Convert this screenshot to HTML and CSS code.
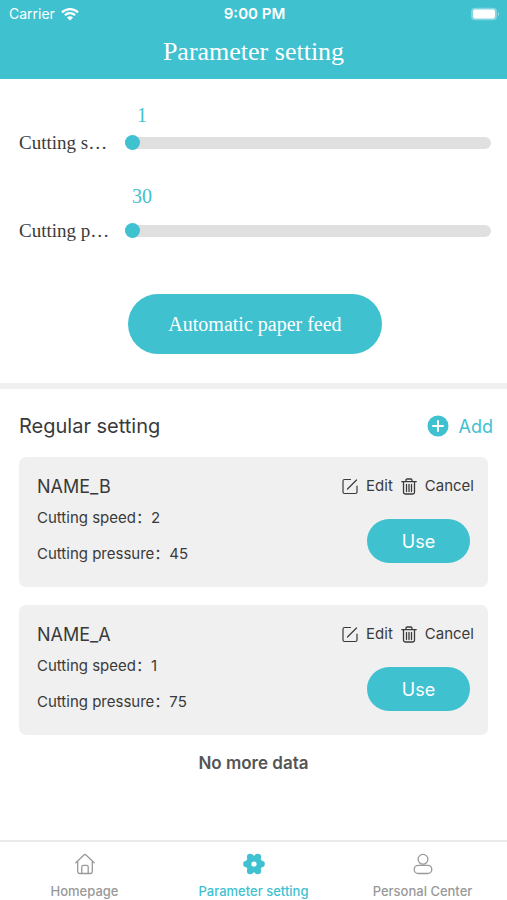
FILE: index.html
```html
<!DOCTYPE html>
<html lang="en">
<head>
<meta charset="utf-8">
<meta name="viewport" content="width=device-width, initial-scale=1">
<title>Parameter setting</title>
<link rel="stylesheet" href="styles.css">
</head>
<body>
<svg width="0" height="0" class="sprite" aria-hidden="true">
  <symbol id="icon-edit" viewBox="0 0 16 16">
    <path d="M8.500 1H2.500Q1 1 1 2.500v11Q1 15 2.500 15h11q1.500 0 1.500-1.500V7.500M5.500 10.500 14.500 1.500" fill="none" stroke="currentColor" stroke-width="1.200" stroke-linecap="round"/>
  </symbol>
  <symbol id="icon-trash" viewBox="0 0 16 17">
    <path d="M.8 3.700h14.400M5 3.500V2.200Q5 1 6.200 1h3.600Q11 1 11 2.200v1.300M2.500 4v10.200q0 1.800 1.800 1.800h7.400q1.800 0 1.800-1.800V4M5.500 6.500v7M8 6.500v7M10.500 6.500v7" fill="none" stroke="currentColor" stroke-width="1.300" stroke-linecap="round"/>
  </symbol>
</svg>

<header class="header">
  <div class="status">
    <span class="status-carrier">Carrier
      <svg class="wifi" viewBox="0 0 18 14" aria-hidden="true">
        <path d="M1 5.300a11.500 11.500 0 0 1 16 0M3.900 8.300a7.300 7.300 0 0 1 10.200 0" fill="none" stroke="currentColor" stroke-width="2.300"/>
        <path d="M9 13.600 5.900 10.500a4.400 4.400 0 0 1 6.200 0z" fill="currentColor"/>
      </svg>
    </span>
    <span class="status-time">9:00 PM</span>
    <svg class="battery" viewBox="0 0 30 14" aria-hidden="true">
      <rect x="1" y=".8" width="26" height="12.400" rx="4" fill="#fff" fill-opacity=".35"/>
      <rect x="3" y="2.500" width="22" height="9" rx="2" fill="#fff"/>
      <path d="M28 4.700q2 2.300 0 4.600z" fill="#fff" fill-opacity=".5"/>
    </svg>
  </div>
  <h1 class="title">Parameter setting</h1>
</header>

<main class="main">
  <section class="controls">
    <div class="control">
      <output class="control-value" for="speed">1</output>
      <label class="control-label" for="speed">Cutting speed</label>
      <input class="slider" id="speed" type="range" min="1" max="10" value="1">
    </div>
    <div class="control control-spaced">
      <output class="control-value" for="pressure">30</output>
      <label class="control-label" for="pressure">Cutting pressure</label>
      <input class="slider" id="pressure" type="range" min="30" max="100" value="30">
    </div>
    <button class="feed" type="button">Automatic paper feed</button>
  </section>

  <section class="presets">
    <div class="presets-head">
      <h2 class="presets-title">Regular setting</h2>
      <button class="add" type="button">
        <svg class="add-icon" viewBox="0 0 22 22" aria-hidden="true">
          <circle cx="11" cy="11" r="10.500" fill="currentColor"/>
          <path d="M11 6v10M6 11h10" stroke="#fff" stroke-width="2" stroke-linecap="round"/>
        </svg>
        Add
      </button>
    </div>

    <article class="card">
      <div class="card-info">
        <h3 class="card-name">NAME_B</h3>
        <p class="card-line">Cutting speed：2</p>
        <p class="card-line">Cutting pressure：45</p>
      </div>
      <div class="card-side">
        <div class="card-actions">
          <button class="action" type="button"><svg class="action-icon" aria-hidden="true"><use href="#icon-edit"/></svg>Edit</button>
          <button class="action" type="button"><svg class="action-icon" aria-hidden="true"><use href="#icon-trash"/></svg>Cancel</button>
        </div>
        <button class="use" type="button">Use</button>
      </div>
    </article>

    <article class="card">
      <div class="card-info">
        <h3 class="card-name">NAME_A</h3>
        <p class="card-line">Cutting speed：1</p>
        <p class="card-line">Cutting pressure：75</p>
      </div>
      <div class="card-side">
        <div class="card-actions">
          <button class="action" type="button"><svg class="action-icon" aria-hidden="true"><use href="#icon-edit"/></svg>Edit</button>
          <button class="action" type="button"><svg class="action-icon" aria-hidden="true"><use href="#icon-trash"/></svg>Cancel</button>
        </div>
        <button class="use" type="button">Use</button>
      </div>
    </article>

    <p class="end">No more data</p>
  </section>
</main>

<nav class="tabs">
  <a class="tab" href="#home">
    <svg class="tab-icon" viewBox="0 0 22 22" aria-hidden="true">
      <path d="M1.800 9.800 10 2q1-.9 2 0l8.200 7.800M3.700 8.500v10.200q0 1.800 1.800 1.800h11q1.800 0 1.800-1.800V8.500M7.800 20.300v-6.500q0-1.500 1.500-1.500h3.400q1.500 0 1.500 1.500v6.500" fill="none" stroke="currentColor" stroke-width="1.300" stroke-linecap="round" stroke-linejoin="round"/>
    </svg>
    Homepage
  </a>
  <a class="tab tab-active" href="#parameters" aria-current="page">
    <svg class="tab-icon" viewBox="0 0 22 22" aria-hidden="true">
      <g fill="currentColor">
        <circle cx="11" cy="11" r="8.400"/>
        <circle cx="3.500" cy="11" r="3.300"/><circle cx="18.500" cy="11" r="3.300"/>
        <circle cx="7.200" cy="4" r="3.300"/><circle cx="14.800" cy="4" r="3.300"/>
        <circle cx="7.200" cy="18" r="3.300"/><circle cx="14.800" cy="18" r="3.300"/>
      </g>
      <circle cx="11" cy="11" r="2.600" fill="#fff"/>
    </svg>
    Parameter setting
  </a>
  <a class="tab" href="#personal">
    <svg class="tab-icon" viewBox="0 0 22 22" aria-hidden="true">
      <g fill="none" stroke="currentColor" stroke-width="1.300">
        <circle cx="11" cy="6.300" r="4.900"/>
        <rect x="2.200" y="12.300" width="17.600" height="8.200" rx="4.100"/>
      </g>
    </svg>
    Personal Center
  </a>
</nav>
</body>
</html>
```
FILE: styles.css
```css
:root {
  --accent: #3fc1d0;
  --text: #3a3a3a;
  --muted: #999;
  --panel: #f0f0f0;
  --sans: Inter, "Noto Sans CJK SC", sans-serif;
  --serif: "Liberation Serif", serif;
}

* {
  box-sizing: border-box;
}

body {
  display: flex;
  flex-direction: column;
  min-height: 100vh;
  margin: 0;
  background: #fff;
  color: var(--text);
  font-family: var(--sans);
}

h1,
h2,
h3,
p {
  margin: 0;
  font-weight: 400;
}

button {
  padding: 0;
  border: 0;
  background: none;
  color: inherit;
  font-family: inherit;
  cursor: pointer;
}

.sprite {
  position: absolute;
}

.header {
  padding-bottom: 7px;
  background: var(--accent);
  color: #fff;
}

.status {
  display: grid;
  grid-template-columns: 1fr auto 1fr;
  align-items: center;
  height: 27px;
  padding: 0 7px 0 9px;
  font-size: 14px;
}

.status-carrier {
  display: flex;
  align-items: center;
  gap: 6px;
}

.wifi {
  width: 18px;
  height: 14px;
}

.status-time {
  font-size: 15px;
  font-weight: 600;
}

.battery {
  justify-self: end;
  width: 30px;
  height: 14px;
}

.title {
  padding-top: 5px;
  font-family: var(--serif);
  font-size: 26px;
  line-height: 40px;
  text-align: center;
}

.controls {
  display: flex;
  flex-direction: column;
  padding: 24px 16px 29px 19px;
  border-bottom: 6px solid var(--panel);
  font-family: var(--serif);
}

.control {
  display: grid;
  grid-template-columns: 96px 1fr;
  column-gap: 10px;
  row-gap: 4px;
  align-items: center;
}

.control-spaced {
  margin-top: 29px;
  row-gap: 11px;
}

.control-value {
  grid-column: 2;
  width: 34px;
  color: var(--accent);
  font-size: 20px;
  line-height: 24px;
  text-align: center;
}

.control-label {
  overflow: hidden;
  font-size: 19px;
  line-height: 24px;
  text-overflow: ellipsis;
  white-space: nowrap;
}

.slider {
  width: 100%;
  height: 16px;
  margin: 0;
  appearance: none;
  background: none;
}

.slider::-webkit-slider-runnable-track {
  height: 12px;
  border-radius: 6px;
  background: #e0e0e0;
}

.slider::-webkit-slider-thumb {
  width: 15px;
  height: 15px;
  margin-top: -2px;
  appearance: none;
  border-radius: 50%;
  background: var(--accent);
}

.feed {
  align-self: center;
  height: 60px;
  margin-top: 51px;
  padding: 0 40px;
  border-radius: 30px;
  background: var(--accent);
  color: #fff;
  font-size: 20px;
}

.presets {
  padding: 19px 19px 24px;
}

.presets-head {
  display: flex;
  align-items: center;
  justify-content: space-between;
  height: 36px;
  margin: 0 -5px 13px 0;
}

.presets-title {
  font-size: 20px;
}

.add {
  display: flex;
  align-items: center;
  gap: 10px;
  color: var(--accent);
  font-size: 18px;
}

.add-icon {
  width: 22px;
  height: 22px;
}

.card {
  display: flex;
  justify-content: space-between;
  margin-bottom: 18px;
  padding: 18px 14px 21px 18px;
  border-radius: 7px;
  background: var(--panel);
}

.card-name {
  margin-bottom: 7px;
  font-size: 18px;
  line-height: 24px;
}

.card-line {
  margin-bottom: 12px;
  font-size: 15px;
  line-height: 24px;
}

.card-line:last-child {
  margin-bottom: 0;
}

.card-side {
  display: flex;
  flex-direction: column;
  align-items: flex-end;
}

.card-actions {
  display: flex;
  gap: 8px;
}

.action {
  display: flex;
  align-items: center;
  gap: 8px;
  font-size: 15px;
  line-height: 22px;
}

.action-icon {
  width: 16px;
  height: 17px;
}

.use {
  width: 103px;
  height: 44px;
  margin: 22px 4px 0 0;
  border-radius: 22px;
  background: var(--accent);
  color: #fff;
  font-size: 18px;
}

.end {
  color: #555;
  font-size: 17px;
  font-weight: 600;
  line-height: 20px;
  text-align: center;
}

.tabs {
  display: grid;
  grid-template-columns: repeat(3, 1fr);
  margin-top: auto;
  padding: 11px 0 1px;
  border-top: 2px solid #ebebeb;
}

.tab {
  display: flex;
  flex-direction: column;
  align-items: center;
  gap: 8px;
  color: var(--muted);
  font-size: 13px;
  font-weight: 500;
  line-height: 16px;
  text-decoration: none;
}

.tab-active {
  color: var(--accent);
}

.tab-icon {
  width: 22px;
  height: 22px;
}
```
